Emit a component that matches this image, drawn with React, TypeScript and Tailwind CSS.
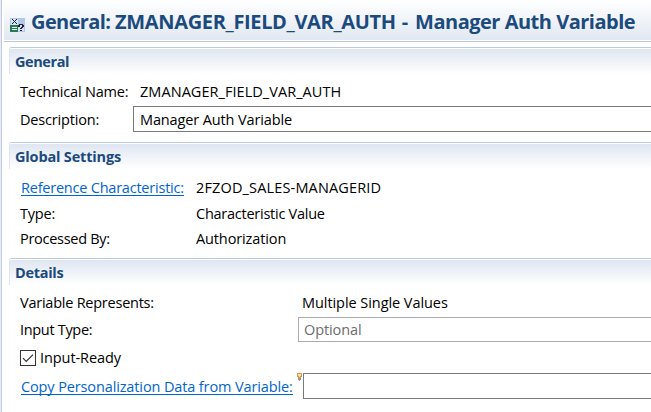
import type { ReactNode } from 'react';

function Section({ title, className, children }: { title: ReactNode; className: string; children: ReactNode }) {
  return (
    <section className={`ml-[5px] shrink-0 rounded-tl-[3px] border-t border-[#b9c9df] ${className}`}>
      <div className="h-[26px] rounded-tl-[3px] border-t border-l border-t-white border-l-[#dde4ef] bg-linear-to-b from-[#dfe6f1] to-white pl-[5px] text-[14.5px] leading-[25px] font-bold text-[#1b4a7e]">
        {title}
      </div>
      <div className="pl-[11px]">{children}</div>
    </section>
  );
}

function QueryIcon() {
  return (
    <svg width="15" height="14" viewBox="0 0 15 14" shapeRendering="crispEdges" className="shrink-0">
      <path fill="#b0c8ea" d="M0 0h15v14H0z" />
      <path fill="#d5e3f5" d="M1 1h7v6H1zM8 7h6v6H8z" />
      <path fill="#27795a" d="M0 7h8v7H0z" />
      <path fill="#e3f1ea" d="M2 9h5v1H2zM2 11h5v1H2z" />
      <path fill="#1f2226" d="M2 1h1v1H2zM6 1h1v1H6zM3 2h1v1H3zM5 2h1v1H5zM4 3h1v1H4zM3 4h1v1H3zM5 4h1v1H5zM2 5h1v1H2zM6 5h1v1H6z" />
      <path fill="#1f2226" d="M9 6h4v1H9zM8 7h2v2H8zM12 7h2v2h-2zM11 9h2v1h-2zM10 10h2v1h-2zM10 12h2v1h-2z" />
    </svg>
  );
}

export default function App() {
  return (
    <div className="flex h-[412px] w-[651px] overflow-hidden bg-white font-['Open_Sans','Noto_Sans',sans-serif] text-[14.5px] whitespace-nowrap text-black">
      <div className="w-[2px] shrink-0 border-r border-[#c5cce4] bg-[#e6e9f6]" />
      <main className="ml-[2px] flex min-w-0 flex-1 flex-col">
        <header className="h-[42px] shrink-0 border-b border-[#b9c9df] bg-white pb-px">
          <div className="flex h-[40px] items-start bg-linear-to-b from-white to-[#e1e8f1] pl-[6px]">
            <div className="pt-[18px]"><QueryIcon /></div>
            <h1 className="ml-[6px] text-[20px] leading-[43px] font-bold text-[#1b4a7e]">
              <span className="tracking-[-0.6px]">General: </span>
              <span className="tracking-[-0.34px]">ZMANAGER_FIELD_VAR_AUTH</span>
              <span className="tracking-[0.8px]"> - </span>
              <span className="tracking-[-0.49px]">Manager Auth Variable</span>
            </h1>
          </div>
        </header>

        <Section title={<span className="tracking-[-0.42px]">General</span>} className="mt-[5px] h-[95px]">
          <div className="mt-[4px] flex h-[28px] items-center">
            <span className="w-[120px] tracking-[-0.2px]">Technical Name:</span>
            <span className="tracking-[0.05px]">ZMANAGER_FIELD_VAR_AUTH</span>
          </div>
          <div className="flex h-[26px] items-center">
            <span className="w-[113px] pt-px tracking-[-0.17px]">Description:</span>
            <div className="h-[26px] flex-1 border border-r-0 border-[#7a7a7a] pl-[6px] leading-[25px]">
              <span className="tracking-[-0.13px]">Manager Auth Variable</span>
            </div>
          </div>
        </Section>

        <Section title={<span className="tracking-[-0.17px]">Global Settings</span>} className="h-[116px]">
          <div className="mt-[5px] flex h-[27px] items-center">
            <span className="w-[176px] pl-px text-[#0066cc]">
              <span className="inline-block h-[18px] border-b border-[#0066cc] leading-[20px] tracking-[-0.22px]">Reference Characteristic:</span>
            </span>
            <span className="tracking-[0.15px]">2FZOD_SALES-MANAGERID</span>
          </div>
          <div className="flex h-[25px] items-center">
            <span className="w-[176px] tracking-[-0.2px]">Type:</span>
            <span className="tracking-[-0.25px]">Characteristic Value</span>
          </div>
          <div className="flex h-[25px] items-center">
            <span className="w-[176px] tracking-[-0.28px]">Processed By:</span>
            <span className="tracking-[-0.12px]">Authorization</span>
          </div>
        </Section>

        <Section title={<span className="tracking-[-0.3px]">Details</span>} className="h-[154px]">
          <div className="mt-[4px] flex h-[28px] items-center">
            <span className="w-[282px] tracking-[-0.24px]">Variable Represents:</span>
            <span className="tracking-[-0.06px]">Multiple Single Values</span>
          </div>
          <div className="flex h-[25px] items-center">
            <span className="w-[278px] tracking-[-0.32px]">Input Type:</span>
            <div className="h-[25px] flex-1 border border-r-0 border-[#ababab] pl-[5px] leading-[24px] text-[#6d6d6d]">
              <span className="tracking-[-0.1px]">Optional</span>
            </div>
          </div>
          <div className="mt-[2px] flex h-[27px] items-center">
            <span className="flex size-[16px] items-center justify-center border border-[#333]">
              <svg width="14" height="14" viewBox="0 0 14 14" fill="none" stroke="#333" strokeWidth="1.2">
                <path d="M2 7.2 5.2 10.4 12 3.6" />
              </svg>
            </span>
            <span className="ml-[4px] tracking-[-0.07px]">Input-Ready</span>
          </div>
          <div className="mt-[2px] flex h-[26px] items-center">
            <span className="w-[277px] pt-[2px] pl-px text-[#0066cc]">
              <span className="inline-block h-[18px] border-b border-[#0066cc] leading-[20px] tracking-[-0.125px]">Copy Personalization Data from Variable:</span>
            </span>
            <svg width="5" height="8" viewBox="0 0 5 8" shapeRendering="crispEdges" className="mr-px self-start">
              <path d="M0 0h5v4H4v1H1V4H0z" fill="#e39440" />
              <path d="M1 1h3v2H3v1H2V3H1z" fill="#ffe6b4" />
              <path d="M1 5h3v2H3v1H2V7H1z" fill="#98938e" />
            </svg>
            <div className="h-[26px] flex-1 border border-r-0 border-[#7a7a7a]" />
          </div>
        </Section>
      </main>
    </div>
  );
}
